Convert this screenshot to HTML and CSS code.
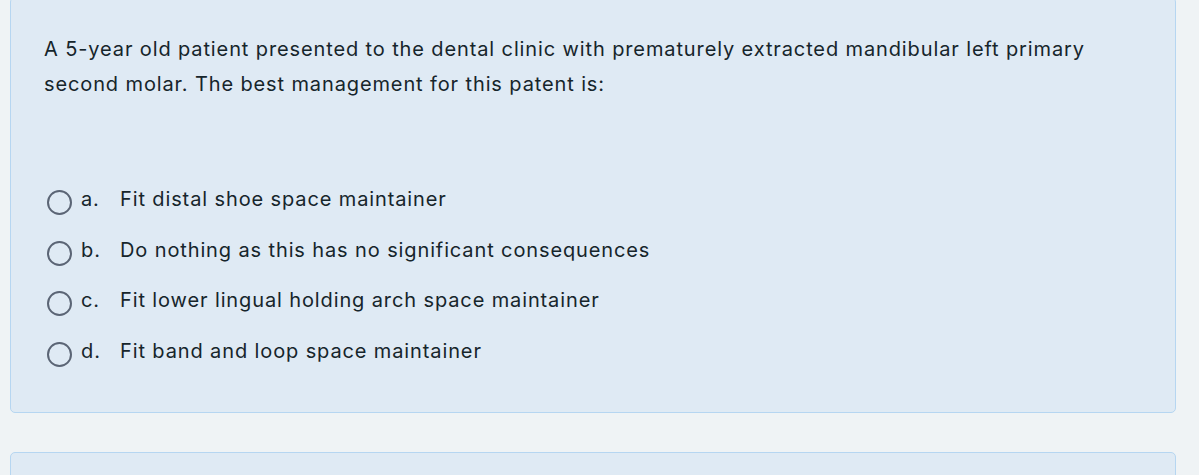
FILE: index.html
```html
<!DOCTYPE html>
<html>
<head>
<meta charset="utf-8">
<link rel="stylesheet" href="styles.css">
</head>
<body>
<div class="page">
  <div class="card">
    <div class="qtext">A 5-year old patient presented to the dental clinic with prematurely extracted mandibular left primary second molar. The best management for this patent is:</div>
    <div class="answers">
      <div class="opt"><span class="radio"></span><span class="letter">a.</span><span class="label">Fit distal shoe space maintainer</span></div>
      <div class="opt"><span class="radio"></span><span class="letter">b.</span><span class="label">Do nothing as this has no significant consequences</span></div>
      <div class="opt"><span class="radio"></span><span class="letter">c.</span><span class="label">Fit lower lingual holding arch space maintainer</span></div>
      <div class="opt"><span class="radio"></span><span class="letter">d.</span><span class="label">Fit band and loop space maintainer</span></div>
    </div>
  </div>
  <div class="card next"></div>
</div>
</body>
</html>
```
FILE: styles.css
```css
html, body {
  margin: 0;
  padding: 0;
  background: #eff3f5;
  height: 100%;
  overflow: hidden;
}
body {
  font-family: Inter, "Noto Sans", sans-serif;
  color: #16252b;
}
.page {
  padding: 0 23px 0 10px;
  margin-top: -3px;
}
.card {
  background: #dfeaf4;
  border: 1px solid #b6d6f1;
  border-radius: 5px;
  padding: 34px 33px 28px 33px;
  height: 352px;
}
.card.next {
  margin-top: 39px;
  height: 40px;
}
.qtext {
  font-size: 20px;
  letter-spacing: 0.88px;
  line-height: 35px;
}
.answers {
  margin-top: 72px;
  display: flex;
  flex-direction: column;
}
.opt {
  display: flex;
  align-items: center;
  height: 50.5px;
  font-size: 20px;
  letter-spacing: 0.88px;
}
.radio {
  width: 21px;
  height: 21px;
  border: 2px solid #5b6575;
  border-radius: 50%;
  margin-left: 3px;
  margin-right: 9px;
  margin-top: 7px;
  flex: none;
}
.letter {
  width: 39px;
}
```
